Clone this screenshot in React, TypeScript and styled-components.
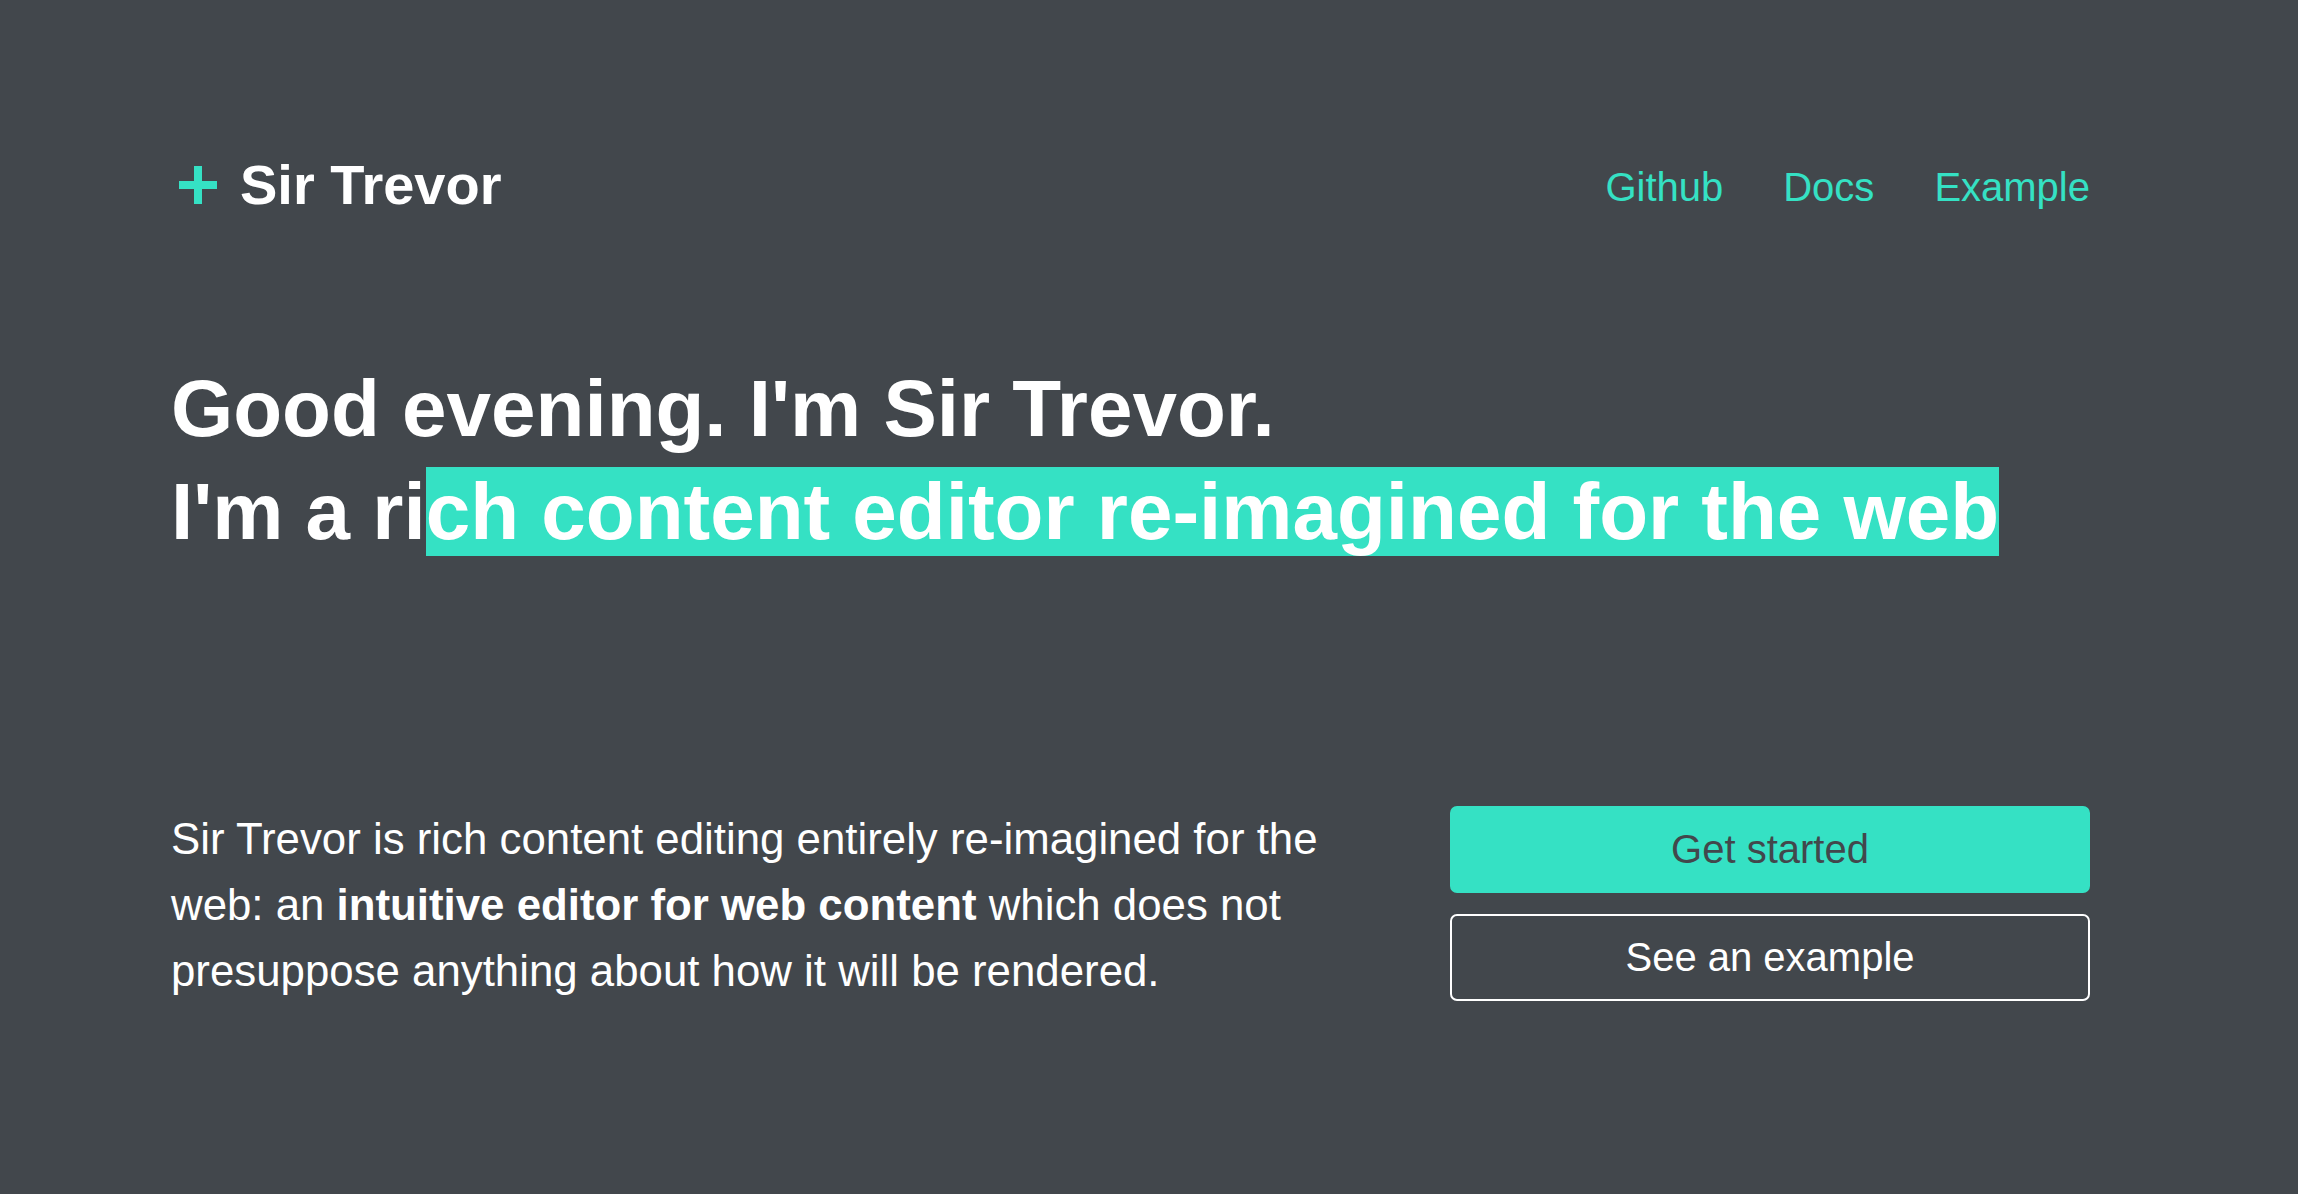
import React from 'react';
import styled, { createGlobalStyle } from 'styled-components';

const bg = '#42474c';
const teal = '#35e1c4';

const Global = createGlobalStyle`
  html, body {
    margin: 0;
    padding: 0;
    background: ${bg};
  }
  body {
    font-family: "Liberation Sans", Arial, Helvetica, sans-serif;
    color: #ffffff;
  }
`;

const Page = styled.div`
  min-height: 1194px;
  padding: 0 208px 0 171px;
  box-sizing: border-box;
`;

const Header = styled.header`
  display: flex;
  justify-content: space-between;
  align-items: flex-start;
  padding-top: 157px;
`;

const Logo = styled.a`
  display: flex;
  align-items: center;
  gap: 23px;
  margin-left: 8px;
  height: 55px;
  font-size: 56px;
  line-height: 55px;
  font-weight: 700;
  color: #ffffff;
  text-decoration: none;
`;

const Nav = styled.nav`
  display: flex;
  gap: 60px;
  margin-top: 3px;
`;

const NavLink = styled.a`
  font-size: 40px;
  line-height: 55px;
  color: ${teal};
  text-decoration: none;
`;

const Headline = styled.h1`
  margin: 142px 0 0;
  font-size: 80px;
  line-height: 103px;
  font-weight: 700;
  color: #ffffff;
`;

const Highlight = styled.span`
  background: ${teal};
`;

const Intro = styled.section`
  display: grid;
  grid-template-columns: 1fr 640px;
  column-gap: 80px;
  margin-top: 243px;
`;

const Lead = styled.p`
  margin: 0;
  font-size: 43.8px;
  line-height: 66px;
  color: #ffffff;

  strong {
    font-weight: 700;
  }
`;

const Actions = styled.div`
  display: flex;
  flex-direction: column;
  gap: 21px;
`;

const Button = styled.a<{ $primary?: boolean }>`
  display: flex;
  align-items: center;
  justify-content: center;
  box-sizing: border-box;
  height: 87px;
  border-radius: 7px;
  font-size: 40px;
  text-decoration: none;
  background: ${p => (p.$primary ? teal : 'transparent')};
  color: ${p => (p.$primary ? bg : '#ffffff')};
  border: 2px solid ${p => (p.$primary ? teal : '#ffffff')};
`;

const Plus = () => (
  <svg width="38" height="38" viewBox="0 0 38 38" aria-hidden="true">
    <rect x="15" y="0" width="8" height="38" fill={teal} />
    <rect x="0" y="15" width="38" height="8" fill={teal} />
  </svg>
);

export default function App() {
  return (
    <>
      <Global />
      <Page>
        <Header>
          <Logo href="#">
            <Plus />
            Sir Trevor
          </Logo>
          <Nav>
            <NavLink href="#">Github</NavLink>
            <NavLink href="#">Docs</NavLink>
            <NavLink href="#">Example</NavLink>
          </Nav>
        </Header>

        <Headline>
          Good evening. I'm Sir Trevor.
          <br />
          I'm a ri<Highlight>ch content editor re-imagined for the web</Highlight>
        </Headline>

        <Intro>
          <Lead>
            Sir Trevor is rich content editing entirely re-imagined for the web: an{' '}
            <strong>intuitive editor for web content</strong> which does not presuppose
            anything about how it will be rendered.
          </Lead>
          <Actions>
            <Button href="#" $primary>Get started</Button>
            <Button href="#">See an example</Button>
          </Actions>
        </Intro>
      </Page>
    </>
  );
}
